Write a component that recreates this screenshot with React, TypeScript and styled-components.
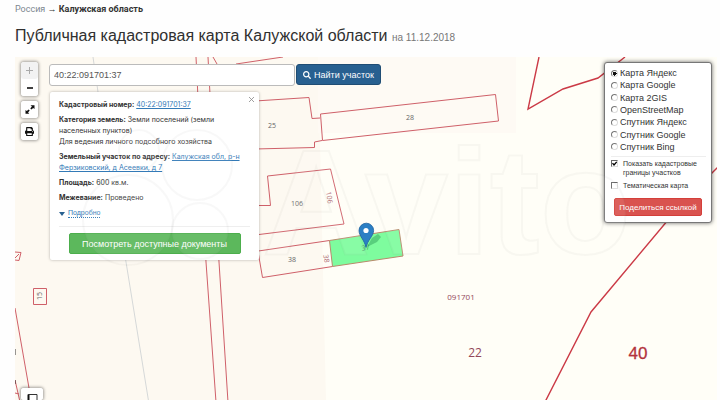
import React, { useState } from "react";
import styled, { createGlobalStyle } from "styled-components";
import { FaPrint, FaSearch } from "react-icons/fa";

const GlobalStyle = createGlobalStyle`
  * { box-sizing: border-box; }
  body {
    margin: 0;
    background: #fefefe;
    color: #333;
    font-family: "Liberation Sans", Arial, sans-serif;
  }
  button, input { font-family: inherit; }
`;

const Page = styled.div`
  display: flex;
  flex-direction: column;
  height: 100vh;
  min-height: 300px;
  padding: 3px 3px 0 15px;
`;

const Breadcrumb = styled.nav`
  font-family: Roboto, "Liberation Sans", sans-serif;
  font-size: 9px;
  line-height: 12px;
  a { color: #7d8790; text-decoration: none; }
`;

const Title = styled.h1`
  margin: 8px 0 9px;
  font-size: 16px;
  line-height: 25px;
  font-weight: 400;
  color: #303030;
  small { font-size: 10px; line-height: 1; color: #777; }
`;

const MapArea = styled.main`
  position: relative;
  flex: 1;
  min-height: 0;
  overflow: hidden;
  background: #fffef7;
`;

const MapCanvas = styled.svg`
  position: absolute;
  inset: 0;
  width: 100%;
  height: 100%;
  font-family: "Open Sans", "Noto Sans", sans-serif;
`;

const Overlay = styled.div`
  position: relative;
  display: flex;
  align-items: flex-start;
  height: 100%;
  padding: 5px 5px 0 6px;
`;

const Tools = styled.div`
  display: flex;
  flex-direction: column;
  gap: 5px;
  width: 17px;
  height: 100%;
  margin-right: 11px;
`;

const ToolGroup = styled.div<{ $corner?: boolean }>`
  width: ${(p) => (p.$corner ? 22 : 17)}px;
  margin-top: ${(p) => (p.$corner ? "auto" : "0")};
  flex: none;
  border-radius: 3px;
  background: #fff;
  box-shadow: 0 0 3px 1px rgba(0, 0, 0, 0.35);
`;

const ToolButton = styled.button<{ $muted?: boolean; $cut?: boolean }>`
  display: flex;
  align-items: center;
  justify-content: center;
  width: 100%;
  height: ${(p) => (p.$cut ? 12 : 17)}px;
  padding: ${(p) => (p.$cut ? "6px 0 0" : "0")};
  border: 0;
  border-radius: 3px;
  background: ${(p) => (p.$muted ? "#f2f2f2" : "#fff")};
  color: ${(p) => (p.$muted ? "#aaa" : "#111")};
`;

const Center = styled.div`
  flex: 1;
  min-width: 0;
  padding-top: 2px;
`;

const SearchBar = styled.form`
  display: flex;
  gap: 1px;
  margin: 0;
`;

const SearchInput = styled.input`
  width: 246px;
  height: 22px;
  padding: 0 4px;
  border: 1px solid #bbb;
  border-radius: 3px;
  background: #fff;
  color: #555;
  font-size: 9px;
`;

const SearchButton = styled.button`
  display: flex;
  align-items: center;
  justify-content: center;
  gap: 3px;
  width: 85px;
  height: 21px;
  padding: 0;
  border: 1px solid #204d74;
  border-radius: 3px;
  background: #286090;
  color: #fff;
  font-size: 9px;
  white-space: nowrap;
`;

const InfoPanel = styled.section`
  position: relative;
  width: 209px;
  margin: 6px 0 0 1px;
  padding: 7px 9px 6px 9px;
  border-radius: 2px;
  background: #fff;
  box-shadow: 0 0 3px rgba(0, 0, 0, 0.3);
  font-family: Inter, "Liberation Sans", sans-serif;
  font-size: 7px;
  line-height: 11px;
`;

const InfoLine = styled.p`
  margin: 0 0 4px;
  white-space: nowrap;
`;

const InfoLink = styled.a`
  color: #337ab7;
  text-decoration: underline;
`;

const CloseButton = styled.button`
  position: absolute;
  top: 3px;
  right: 3px;
  display: flex;
  padding: 2px;
  border: 0;
  background: none;
  color: #888;
`;

const MoreLink = styled.a`
  display: flex;
  align-items: center;
  gap: 3px;
  margin-top: 6px;
  color: #337ab7;
  text-decoration: none;
  font-family: "Liberation Sans", Arial, sans-serif;
  font-size: 7px;
  span { border-bottom: 1px dotted #337ab7; line-height: 8px; }
`;

const DocsButton = styled.button`
  display: block;
  width: 172px;
  height: 21px;
  margin: 6px auto 0;
  padding: 0;
  border: 1px solid #4cae4c;
  border-radius: 2px;
  background: #5cb85c;
  color: #fff;
  font-family: "Liberation Sans", Arial, sans-serif;
  font-size: 9px;
`;

const Divider = styled.hr<{ $tight?: boolean }>`
  margin: ${(p) => (p.$tight ? "3px 0 2px" : "8px 0 0")};
  border: 0;
  border-top: 1px solid #eee;
`;

const LayerPanel = styled.form`
  width: 108px;
  margin: 0;
  padding: 4px 5px 6px 6px;
  border: 1px solid #777;
  border-radius: 3px;
  background: #fff;
  box-shadow: 0 0 4px rgba(0, 0, 0, 0.6);
`;

const LayerList = styled.fieldset`
  display: grid;
  grid-auto-rows: 1fr;
  height: 86px;
  margin: 0;
  padding: 0;
  border: 0;
`;

const LayerLabel = styled.label`
  display: flex;
  align-items: center;
  gap: 2px;
  font-size: 9px;
  white-space: nowrap;
`;

const Radio = styled.input`
  appearance: none;
  width: 7px;
  height: 7px;
  margin: 0;
  border: 1px solid;
  border-color: #777 #ddd #ddd #777;
  border-radius: 50%;
  background: #fff;
  &:checked {
    background: radial-gradient(circle, #111 0 2px, #fff 2px);
  }
`;

const CheckLabel = styled.label`
  display: flex;
  align-items: flex-start;
  gap: 5px;
  margin-bottom: 4px;
  font-size: 7px;
  line-height: 9px;
`;

const Checkbox = styled.input`
  appearance: none;
  flex: none;
  width: 7px;
  height: 7px;
  margin: 1px 0 0;
  border: 1px solid;
  border-color: #666 #ddd #ddd #666;
  background: #fff;
  &:checked {
    background: #fff
      url("data:image/svg+xml,%3Csvg xmlns='http://www.w3.org/2000/svg' viewBox='0 0 5 5'%3E%3Cpath d='M.5 2.2L2 4L4.7 .8' fill='none' stroke='%23000' stroke-width='1.3'/%3E%3C/svg%3E");
  }
`;

const ShareButton = styled.button`
  display: block;
  width: 88px;
  height: 18px;
  margin: 8px 0 0 3px;
  padding: 0;
  border: 1px solid #d43f3a;
  border-radius: 2px;
  background: #d9534f;
  color: #fff;
  font-size: 8px;
`;

const Watermark = styled.svg`
  position: absolute;
  inset: 0;
  width: 100%;
  height: 100%;
  pointer-events: none;
`;

const layers = [
  "Карта Яндекс",
  "Карта Google",
  "Карта 2GIS",
  "OpenStreetMap",
  "Спутник Яндекс",
  "Спутник Google",
  "Спутник Bing",
];

function CadastralMap() {
  return (
    <MapCanvas aria-label="Карта участков">
      <g transform="translate(-15 -57)">
        <path d="M15 57H318L326 400H15Z" fill="#fdf9f1" />
        <path d="M318 57H516V133H318Z" fill="#fefaf4" />
        <path d="M93 57L98 92L126 262L150 410" fill="none" stroke="#d5d8d8" />
        <g fill="none" stroke="#cf6069" strokeWidth="1">
          <path d="M196 57L206 262L216 402M208 57L219 262L228 402" />
          <path d="M213 57L217 64M236 64L283 57" />
          <path d="M255 101L309 97.500L312 118.500L320 118M255 149L314.500 147.500V142L322 140.500" />
          <path d="M320.500 114L495.500 94.500L498.500 121L322.500 140.500Z" />
          <path d="M255 205.500H270.500L267.500 176L330.500 169L344 224L255 235" />
          <path d="M255 251.500L329.500 240.500M255 234L262.500 277.500L332.500 266.500" />
          <path d="M15 308L29 388M15 380L20 402M15 393L19 394" />
          <path d="M33.500 288.500H46.500V304.500H33.500Z" />
          <path d="M15 252L21 252.500L19 260.500L15 260M15 258L19 254" />
        </g>
        <path d="M329.500 240.500L399 229.500L403 256L332.500 266.500Z" fill="#7efc9e" stroke="#b98a6c" />
        <g fill="none" stroke="#cb3a46" strokeWidth="1.400">
          <path d="M539 57L528 109L563 89L598 78L625 57" />
          <path d="M720 165L711 174L665.500 223L591 312L545 402" />
        </g>
        <path d="M15 349V355M15 380V384" stroke="#333" />
        <g fontSize="7" fill="#666" textAnchor="middle">
          <text x="272" y="128">25</text>
          <text x="410" y="120">28</text>
          <text x="297" y="206">106</text>
          <text x="292" y="262">38</text>
          <g fill="#a8606a">
            <text transform="translate(327 198) rotate(80)">106</text>
            <text transform="translate(324 259) rotate(80)">38</text>
            <text transform="translate(366 250) rotate(-10)" fill="#4f9a68">37</text>
          </g>
          <text transform="translate(42 296) rotate(-90)">15</text>
        </g>
        <g fill="#93475a" textAnchor="middle">
          <text x="461" y="300" fontSize="8">091701</text>
          <text x="475" y="357" fontSize="12">22</text>
          <text x="638" y="359" fontSize="17" fill="#b3323c" stroke="#b3323c" strokeWidth="0.300" fontFamily="Liberation Sans">40</text>
          <text x="642" y="405" fontSize="8" fill="#555">61</text>
        </g>
        <path d="M367 247L372 238L378 234L381 237L377 242Z" fill="#063" opacity="0.3" />
        <path d="M366 247.500C364.500 240 359 236 359 230.500A7.300 7.300 0 0 1 373.600 230.500C373.600 236 367.500 240 366 247.500Z" fill="#2b7fc4" stroke="#1d629f" strokeWidth="0.800" />
        <circle cx="366" cy="230.500" r="2.600" fill="#fff" />
      </g>
    </MapCanvas>
  );
}

export default function App() {
  const [query, setQuery] = useState("40:22:091701:37");
  const [layer, setLayer] = useState(layers[0]);
  const stop = (e: React.FormEvent) => e.preventDefault();

  return (
    <>
      <GlobalStyle />
      <Page>
        <Breadcrumb>
          <a href="#russia">Россия</a> → <b>Калужская область</b>
        </Breadcrumb>
        <Title>
          Публичная кадастровая карта Калужской области <small>на 11.12.2018</small>
        </Title>
        <MapArea>
          <CadastralMap />
          <Overlay>
            <Tools>
              <ToolGroup>
                <ToolButton $muted aria-label="Приблизить">
                  <svg width="7" height="7" viewBox="0 0 7 7"><path d="M3.500 0V7M0 3.500H7" stroke="currentColor" /></svg>
                </ToolButton>
                <ToolButton aria-label="Отдалить">
                  <svg width="6" height="2"><path d="M0 1H6" stroke="currentColor" strokeWidth="1.600" /></svg>
                </ToolButton>
              </ToolGroup>
              <ToolGroup>
                <ToolButton aria-label="На весь экран">
                  <svg width="10" height="9" viewBox="0 0 10 9">
                    <path d="M5.500 0.300H9.500V4L8.200 2.900L6.400 4.500L5.300 3.400L6.900 1.600ZM0.500 8.700V5L1.800 6.100L3.600 4.500L4.700 5.600L3.100 7.400L4.300 8.700Z" fill="currentColor" />
                  </svg>
                </ToolButton>
              </ToolGroup>
              <ToolGroup>
                <ToolButton aria-label="Печать"><FaPrint size={9} /></ToolButton>
              </ToolGroup>
              <ToolGroup $corner>
                <ToolButton $cut aria-label="Обзорная карта">
                  <svg width="11" height="6" viewBox="0 0 11 6"><path d="M1.500 6V0.500" stroke="#111" strokeWidth="2" /><path d="M1 0.500H10V6" fill="none" stroke="#333" /></svg>
                </ToolButton>
              </ToolGroup>
            </Tools>
            <Center>
              <SearchBar onSubmit={stop}>
                <SearchInput aria-label="Кадастровый номер" value={query} onChange={(e) => setQuery(e.target.value)} />
                <SearchButton><FaSearch size={8} />Найти участок</SearchButton>
              </SearchBar>
              <InfoPanel>
                <CloseButton aria-label="Закрыть">
                  <svg width="5" height="5" viewBox="0 0 5 5"><path d="M0 0L5 5M5 0L0 5" stroke="currentColor" strokeWidth="0.800" /></svg>
                </CloseButton>
                <InfoLine><b>Кадастровый номер:</b> <InfoLink href="#parcel">40:22:091701:37</InfoLink></InfoLine>
                <InfoLine>
                  <b>Категория земель:</b> Земли поселений (земли<br />
                  населенных пунктов)<br />
                  Для ведения личного подсобного хозяйства
                </InfoLine>
                <InfoLine>
                  <b>Земельный участок по адресу:</b>{" "}
                  <InfoLink href="#address">Калужская обл, р-н<br />Ферзиковский, д Асеевки, д 7</InfoLink>
                </InfoLine>
                <InfoLine><b>Площадь:</b> 600 кв.м.</InfoLine>
                <InfoLine><b>Межевание:</b> Проведено</InfoLine>
                <MoreLink href="#more">
                  <svg width="6" height="4"><path d="M0 0H6L3 4Z" fill="#286090" /></svg>
                  <span>Подробно</span>
                </MoreLink>
                <Divider />
                <DocsButton>Посмотреть доступные документы</DocsButton>
              </InfoPanel>
            </Center>
            <LayerPanel onSubmit={stop}>
              <LayerList aria-label="Слой карты">
                {layers.map((name) => (
                  <LayerLabel key={name}>
                    <Radio type="radio" name="layer" checked={layer === name} onChange={() => setLayer(name)} />
                    {name}
                  </LayerLabel>
                ))}
              </LayerList>
              <Divider $tight />
              <CheckLabel>
                <Checkbox type="checkbox" defaultChecked />
                <span>Показать кадастровые<br />границы участков</span>
              </CheckLabel>
              <CheckLabel><Checkbox type="checkbox" />Тематическая карта</CheckLabel>
              <ShareButton>Поделиться ссылкой</ShareButton>
            </LayerPanel>
          </Overlay>
          <Watermark aria-hidden="true">
            <g transform="translate(-15 -57)" fill="#fff" fillOpacity="0.080" stroke="#777" strokeOpacity="0.050" strokeWidth="2">
              <circle cx="128" cy="220" r="45" />
              <circle cx="197" cy="165" r="35" />
              <circle cx="200" cy="231" r="28" />
              <circle cx="139" cy="150" r="20" />
              <text x="262" y="254" fontSize="150" fontWeight="700">Avito</text>
            </g>
          </Watermark>
        </MapArea>
      </Page>
    </>
  );
}
